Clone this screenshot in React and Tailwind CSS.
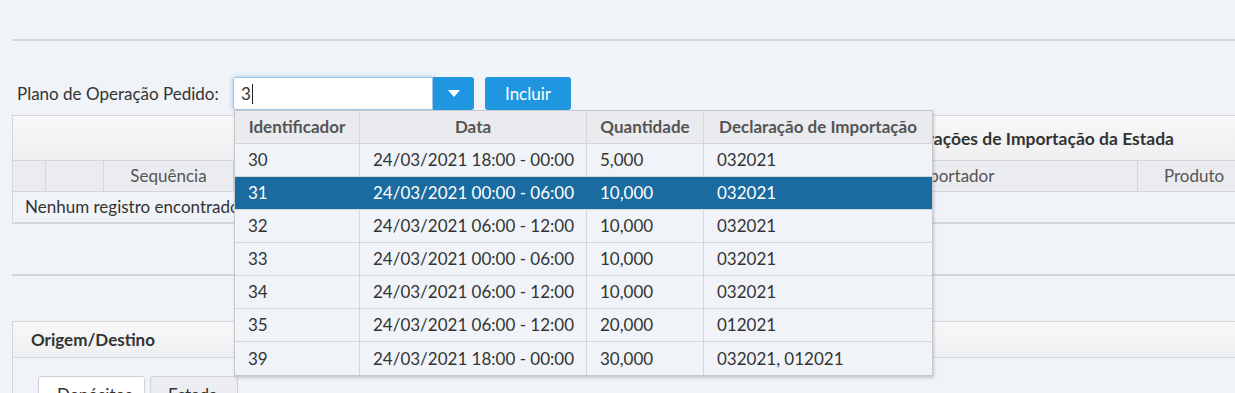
import React from "react";

const rows = [
  ["30", "24/03/2021 18:00 - 00:00", "5,000", "032021"],
  ["31", "24/03/2021 00:00 - 06:00", "10,000", "032021"],
  ["32", "24/03/2021 06:00 - 12:00", "10,000", "032021"],
  ["33", "24/03/2021 00:00 - 06:00", "10,000", "032021"],
  ["34", "24/03/2021 06:00 - 12:00", "10,000", "032021"],
  ["35", "24/03/2021 06:00 - 12:00", "20,000", "012021"],
  ["39", "24/03/2021 18:00 - 00:00", "30,000", "032021, 012021"],
];

function Dropdown() {
  const cols = ["w-[125px]", "w-[227px]", "w-[117px]", "w-[228px]"];
  const heads = ["Identificador", "Data", "Quantidade", "Declaração de Importação"];
  return (
    <div className="absolute left-[1px] top-[33px] z-10 w-[699px] border border-[#c6c8cb] bg-[#f0f3f8] shadow-[1px_2px_3px_rgba(0,0,0,0.18)]">
      <div className="flex h-[33px] border-b border-[#d3d5d8] bg-[#e9ebee] text-[#555] font-bold">
        {heads.map((h, i) => (
          <div
            key={h}
            className={`${cols[i]} flex items-center justify-center whitespace-nowrap ${i < 3 ? "border-r border-[#d3d5d8]" : ""}`}
          >
            {h}
          </div>
        ))}
      </div>
      {rows.map((r, ri) => {
        const sel = ri === 1;
        return (
          <div
            key={r[0]}
            className={`flex h-[33px] ${ri < rows.length - 1 ? "border-b border-[#d3d5d8]" : ""} ${sel ? "bg-[#1a6b9f] text-white" : "text-[#333]"}`}
          >
            {r.map((c, i) => (
              <div
                key={i}
                className={`${cols[i]} flex items-center pl-[13px] whitespace-nowrap ${i < 3 ? (sel ? "border-r border-[#1a6b9f]" : "border-r border-[#d3d5d8]") : ""}`}
              >
                {c}
              </div>
            ))}
          </div>
        );
      })}
    </div>
  );
}

export default function App() {
  return (
    <div
      className="w-[1235px] h-[393px] overflow-hidden bg-[#f0f3f8] text-[#333] text-[17px] leading-normal"
      style={{ fontFamily: "Lato, 'Open Sans', sans-serif" }}
    >
      <div className="h-[39px]" />
      <div className="ml-[12px] h-[2px] bg-[#d4d5d7]" />

      {/* form row */}
      <div className="flex items-center pt-[36px] pl-[17px]">
        <span className="w-[216px] whitespace-nowrap">Plano de Operação Pedido:</span>
        <div className="relative flex h-[33px]">
          <div className="flex h-[33px] w-[200px] items-center rounded-l-[3px] border border-[#9cc6ea] bg-white pl-[7px] shadow-[0_0_4px_rgba(66,150,225,0.55)]">
            <span>3</span>
            <span className="ml-[1px] h-[20px] w-[1px] bg-[#222]" />
          </div>
          <div className="flex h-[33px] w-[41px] items-center justify-center rounded-r-[3px] bg-[#2196e0]">
            <svg width="12" height="7" viewBox="0 0 12 7">
              <path d="M0 0 L12 0 L6 7 Z" fill="#fff" />
            </svg>
          </div>
          <Dropdown />
        </div>
        <button className="ml-[11px] h-[33px] w-[86px] rounded-[3px] bg-[#2196e0] text-white">
          Incluir
        </button>
      </div>

      {/* panel 1 */}
      <div className="mt-[5px] ml-[12px] w-[1240px] border border-[#d5d6d8]">
        <div className="flex h-[44px] items-center justify-end whitespace-nowrap pr-[77px] pt-[2px] text-[17.5px] font-bold bg-gradient-to-b from-[#f8f8f9] to-[#eeeff0]">
          Declarações de Importação da Estada
        </div>
        <div className="flex h-[31px] border-t border-[#d5d6d8] bg-[#eaecef] text-[#555]">
          <div className="w-[33px] border-r border-[#d5d6d8]" />
          <div className="w-[58px] border-r border-[#d5d6d8]" />
          <div className="flex w-[130px] items-center justify-center border-r border-[#d5d6d8]">Sequência</div>
          <div className="w-[534px] border-r border-[#d5d6d8]" />
          <div className="flex w-[370px] items-center justify-center border-r border-[#d5d6d8]">Importador</div>
          <div className="flex w-[112px] items-center justify-center">Produto</div>
        </div>
        <div className="flex h-[31px] items-center whitespace-nowrap border-t border-[#d5d6d8] pl-[12px]">
          Nenhum registro encontrado
        </div>
        <div className="h-[1px] border-t border-[#d5d6d8]" />
      </div>

      <div className="mt-[50px] ml-[12px] h-[2px] bg-[#d4d5d7]" />

      {/* panel 2 */}
      <div className="mt-[45px] ml-[12px] w-[1240px] border-t border-l border-[#d5d6d8]">
        <div className="flex h-[35px] items-center pl-[18px] font-bold bg-gradient-to-b from-[#f8f8f9] to-[#eeeff0]">
          Origem/Destino
        </div>
        <div className="border-t border-[#d5d6d8] pt-[18px] pl-[25px]">
          <div className="flex gap-[5px]">
            <div className="h-[40px] w-[107px] rounded-t-[3px] border border-[#cfd1d4] bg-white pt-[6px] pl-[18px] leading-[24px]">
              Depósitos
            </div>
            <div className="h-[40px] w-[88px] rounded-t-[3px] border border-[#cfd1d4] bg-[#eceef1] pt-[6px] pl-[17px] leading-[24px]">
              Estada
            </div>
          </div>
        </div>
      </div>
    </div>
  );
}
